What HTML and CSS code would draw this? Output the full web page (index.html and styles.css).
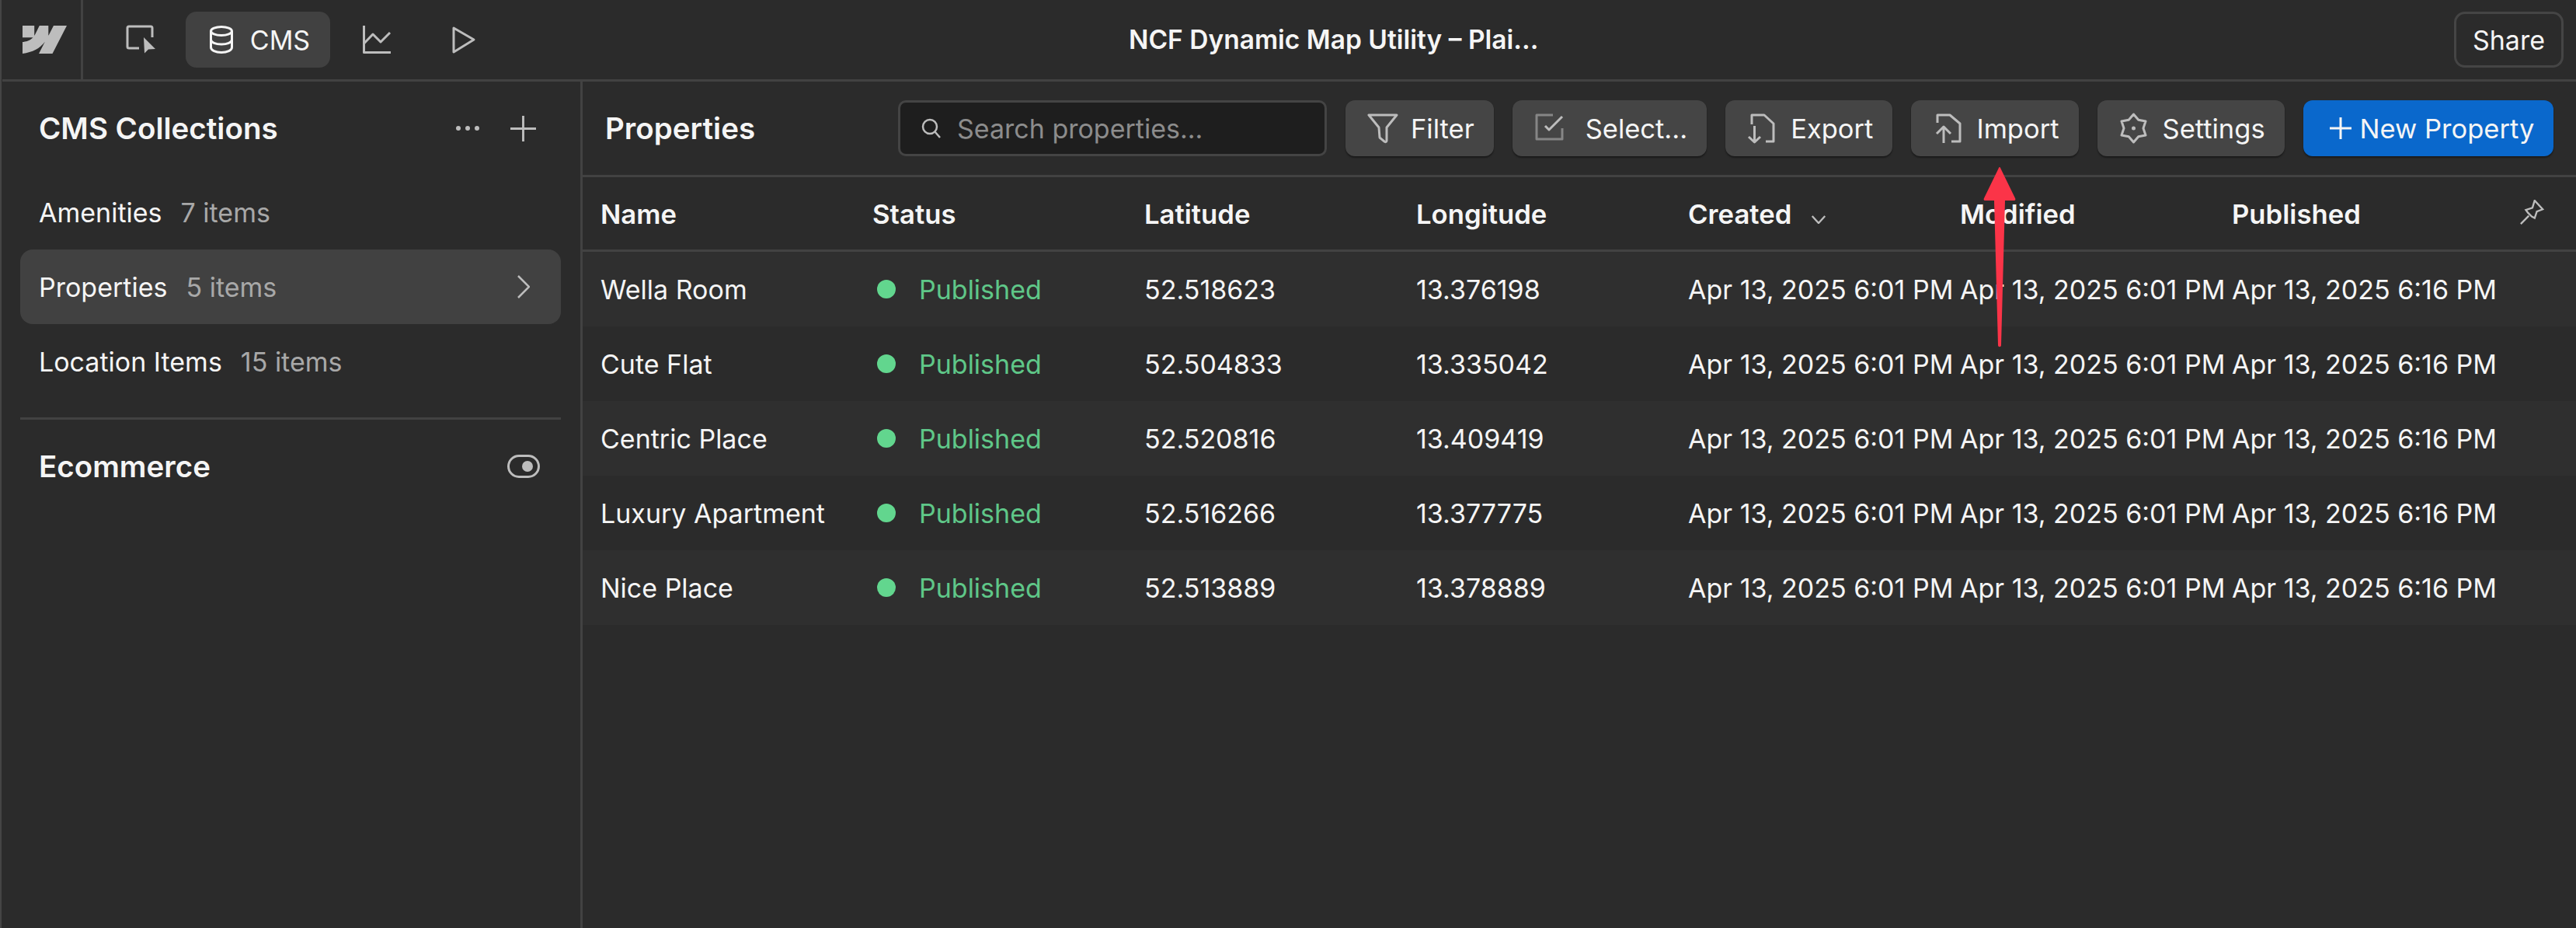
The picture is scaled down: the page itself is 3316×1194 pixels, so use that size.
FILE: index.html
```html
<!DOCTYPE html>
<html lang="en">
<head>
    <meta charset="UTF-8">
    <title>NCF Dynamic Map Utility – CMS</title>
    <link rel="stylesheet" href="styles.css">
</head>
<body>
    <header class="topbar">
        <div class="logo-cell">
            <svg class="logo" viewBox="0 0 57 36"><path d="M57 0 38.500 36H21l7.800-15.200C22.400 29.600 12.800 34.200 0 36V21.100C0 21.100 8.500 20.600 13.500 15.300H0V0h15.200v12.500L15.600 12.500 21.800 0H33.300V12.400L33.600 12.400 40 0Z"/></svg>
        </div>
        <nav class="tabs">
            <div class="tab">
                <svg class="ico" viewBox="0 0 40 40"><path d="M35 17V5q0-2-2-2H5q-2 0-2 2v24q0 2 2 2h13"/><path class="fill" d="M24 17 39 32l-9 .5-5 5z"/></svg>
            </div>
            <div class="tab tab-active">
                <svg class="ico" viewBox="0 0 40 40"><ellipse cx="20" cy="9" rx="13.500" ry="5.500"/><path d="M6.500 9v21c0 3.500 6 6.500 13.500 6.500s13.500-3 13.500-6.500V9M6.500 20c0 3.500 6 6 13.500 6s13.500-2.500 13.500-6"/></svg>
                <span>CMS</span>
            </div>
            <div class="tab">
                <svg class="ico" viewBox="0 0 40 40"><path d="M3.500 2v34.500H38M3.500 25 15 13l10 10L37 11"/></svg>
            </div>
            <div class="tab">
                <svg class="ico" viewBox="0 0 40 40"><path d="M9 5 35 20 9 36z"/></svg>
            </div>
        </nav>
        <div class="doc-title">NCF Dynamic Map Utility – Plai...</div>
        <button class="share">Share</button>
    </header>

    <div class="main">
        <aside class="sidebar">
            <div class="side-head">
                <h2>CMS Collections</h2>
                <div class="side-actions">
                    <svg class="dots" viewBox="0 0 30 8"><circle cx="3" cy="4" r="3"/><circle cx="15" cy="4" r="3"/><circle cx="27" cy="4" r="3"/></svg>
                    <svg class="plus" viewBox="0 0 34 34"><path d="M17 0v34M0 17h34"/></svg>
                </div>
            </div>
            <div class="coll"><span>Amenities</span><em>7 items</em></div>
            <div class="coll coll-active">
                <span>Properties</span><em>5 items</em>
                <svg class="chev" viewBox="0 0 16 30"><path d="M1 1l14 14L1 29"/></svg>
            </div>
            <div class="coll"><span>Location Items</span><em>15 items</em></div>
            <div class="side-rule"></div>
            <div class="ecom">
                <h2>Ecommerce</h2>
                <div class="toggle"><i></i></div>
            </div>
        </aside>

        <section class="content">
            <div class="toolbar">
                <h2>Properties</h2>
                <div class="search">
                    <svg class="search-ico" viewBox="0 0 26 26"><circle cx="11" cy="11" r="9"/><path d="M17.500 17.500 24 25"/></svg>
                    <span>Search properties...</span>
                </div>
                <button class="btn">
                    <svg class="ico" viewBox="0 0 40 40"><path d="M2 3h36L25 19v17c0 2-2 2-3 1l-6-5-1-13z"/></svg>Filter
                </button>
                <button class="btn">
                    <svg class="ico ico-dim" viewBox="0 0 40 40"><path d="M24 3H3v31h33V20"/><path class="check" d="M14 17l5 5L36 5"/></svg><span class="gap">Select...</span>
                </button>
                <button class="btn">
                    <svg class="ico" viewBox="0 0 40 40"><path d="M6 15V3h16l12 11v23H24M9.500 17v21M2 31l7.500 7 7.500-7"/></svg>Export
                </button>
                <button class="btn">
                    <svg class="ico" viewBox="0 0 40 40"><path d="M6 13V3h16l13 11v23H24M14 39V19M5 27l9-9 9 9"/></svg>Import
                </button>
                <button class="btn">
                    <svg class="ico" viewBox="0 0 40 40"><path d="M18.500 2l6.250 7.200L34 11l-3 9 3 9-9.250 1.800L18.500 38l-6.250-7.200L3 29l3-9-3-9 9.250-1.800z"/><circle class="fill" cx="18.500" cy="20" r="2.500"/></svg>Settings
                </button>
                <button class="btn btn-blue">
                    <svg class="ico" viewBox="0 0 28 28"><path d="M14 0v28M0 14h28"/></svg>New Property
                </button>
            </div>

            <div class="row head">
                <div>Name</div>
                <div>Status</div>
                <div>Latitude</div>
                <div>Longitude</div>
                <div class="sorted">Created <svg viewBox="0 0 20 12"><path d="M1 1l9 10 9-10"/></svg></div>
                <div>Modified</div>
                <div>Published</div>
                <svg class="pin" viewBox="0 0 34 34"><path d="M21 1l11 12-8 3-3 9-4-2-5-5-3-4 9-3zM13 22 2 33"/></svg>
            </div>

            <div class="row">
                <div>Wella Room</div>
                <div class="status"><i></i>Published</div>
                <div>52.518623</div>
                <div>13.376198</div>
                <div>Apr 13, 2025 6:01 PM</div>
                <div>Apr 13, 2025 6:01 PM</div>
                <div>Apr 13, 2025 6:16 PM</div>
            </div>
            <div class="row">
                <div>Cute Flat</div>
                <div class="status"><i></i>Published</div>
                <div>52.504833</div>
                <div>13.335042</div>
                <div>Apr 13, 2025 6:01 PM</div>
                <div>Apr 13, 2025 6:01 PM</div>
                <div>Apr 13, 2025 6:16 PM</div>
            </div>
            <div class="row">
                <div>Centric Place</div>
                <div class="status"><i></i>Published</div>
                <div>52.520816</div>
                <div>13.409419</div>
                <div>Apr 13, 2025 6:01 PM</div>
                <div>Apr 13, 2025 6:01 PM</div>
                <div>Apr 13, 2025 6:16 PM</div>
            </div>
            <div class="row">
                <div>Luxury Apartment</div>
                <div class="status"><i></i>Published</div>
                <div>52.516266</div>
                <div>13.377775</div>
                <div>Apr 13, 2025 6:01 PM</div>
                <div>Apr 13, 2025 6:01 PM</div>
                <div>Apr 13, 2025 6:16 PM</div>
            </div>
            <div class="row">
                <div>Nice Place</div>
                <div class="status"><i></i>Published</div>
                <div>52.513889</div>
                <div>13.378889</div>
                <div>Apr 13, 2025 6:01 PM</div>
                <div>Apr 13, 2025 6:01 PM</div>
                <div>Apr 13, 2025 6:16 PM</div>
            </div>
        </section>
    </div>

    <!-- annotation drawn over the screenshot -->
    <svg class="arrow" viewBox="0 0 44 234"><path d="M22 1 C23 1 23 2 23.500 3L42 41c1 2 0 3-2 3H29L24 230c0 3-4 3-4 0L15 44H4c-2 0-3-1-2-3L20.500 3C21 2 21 1 22 1z"/></svg>
</body>
</html>
```

FILE: styles.css
```css
* {
    box-sizing: border-box;
}

html, body {
    height: 100%;
}

body {
    margin: 0;
    padding-left: 1px;
    font-family: Inter, "Liberation Sans", sans-serif;
    font-size: 34px;
    color: #f5f5f5;
    background: linear-gradient(#1c1c1c, #1c1c1c) no-repeat left top / 1px 100%, #2b2b2b;
    border-left: 2px solid #454545;
    overflow: hidden;
    display: flex;
    flex-direction: column;
}

h2 {
    margin: 0;
    font-size: 38.5px;
    font-weight: 600;
}

.ico {
    width: 40px;
    height: 40px;
    fill: none;
    stroke: #bdbdbd;
    stroke-width: 3;
    stroke-linejoin: round;
    flex-shrink: 0;
}

.ico .fill {
    fill: #bdbdbd;
    stroke: none;
}

.ico-dim {
    stroke: #868686;
}

.ico-dim .check {
    stroke: #bdbdbd;
}

/* top bar */
.topbar {
    height: 105px;
    flex-shrink: 0;
    display: flex;
    align-items: center;
    border-bottom: 3px solid #424242;
}

.logo-cell {
    width: 104px;
    height: 100%;
    display: flex;
    align-items: center;
    padding-left: 26px;
    border-right: 3px solid #424242;
}

.logo {
    width: 57px;
    height: 36px;
    fill: #bdbdbd;
}

.tabs {
    width: 1346px;
    display: flex;
    align-items: center;
    gap: 8px;
    padding-left: 24px;
}

.tab {
    height: 72px;
    width: 100px;
    display: flex;
    align-items: center;
    justify-content: center;
    border-radius: 14px;
}

.tab-active {
    width: 186px;
    gap: 17px;
    background-color: #414141;
}

.tab-active ~ .tab {
    margin-left: 2px;
}

.tab-active .ico {
    stroke: #f5f5f5;
}

.doc-title {
    flex: 1;
    font-weight: 600;
    font-size: 33.5px;
}

.share {
    width: 141px;
    height: 72px;
    margin-right: 16px;
    background: none;
    border: 3px solid #454545;
    border-radius: 14px;
    color: #f5f5f5;
    font: inherit;
}

/* sidebar */
.main {
    flex: 1;
    display: flex;
    min-height: 0;
}

.sidebar {
    width: 747px;
    flex-shrink: 0;
    padding: 0 25px 0 23px;
    border-right: 3px solid #424242;
}

.side-head {
    height: 120px;
    display: flex;
    align-items: center;
    justify-content: space-between;
    padding: 0 32px 0 24px;
}

.side-actions {
    display: flex;
    align-items: center;
    gap: 40px;
}

.dots {
    width: 30px;
    height: 8px;
    fill: #bdbdbd;
}

.plus {
    width: 33px;
    height: 33px;
    stroke: #bdbdbd;
    stroke-width: 3;
    fill: none;
}

.coll {
    height: 96px;
    display: flex;
    align-items: center;
    padding: 0 24px;
    border-radius: 16px;
}

.coll em {
    font-style: normal;
    color: #a8a8a8;
    margin-left: 24px;
}

.coll-active {
    background-color: #414141;
}

.chev {
    width: 16px;
    height: 30px;
    margin-left: auto;
    margin-right: 16px;
    fill: none;
    stroke: #bdbdbd;
    stroke-width: 2.500;
}

.side-rule {
    height: 3px;
    margin-top: 24px;
    background-color: #424242;
}

.ecom {
    height: 120px;
    display: flex;
    align-items: center;
    justify-content: space-between;
    padding: 0 27px 0 24px;
}

.toggle {
    width: 42px;
    height: 30px;
    border: 3px solid #bdbdbd;
    border-radius: 15px;
    display: flex;
    align-items: center;
    justify-content: flex-end;
    padding-right: 6px;
}

.toggle i {
    width: 14px;
    height: 14px;
    border-radius: 50%;
    background-color: #bdbdbd;
}

/* toolbar */
.content {
    flex: 1;
    min-width: 0;
}

.toolbar {
    height: 123px;
    display: flex;
    align-items: center;
    padding: 0 0 0 29px;
    gap: 24px;
    border-bottom: 3px solid #424242;
}

.toolbar h2 {
    width: 353px;
    flex-shrink: 0;
}

.search {
    width: 552px;
    height: 72px;
    flex-shrink: 0;
    display: flex;
    align-items: center;
    gap: 20px;
    padding-left: 27px;
    color: #8c8c8c;
    background-color: #1e1e1e;
    border: 3px solid #444444;
    border-radius: 10px;
}

.search-ico {
    width: 26px;
    height: 26px;
    fill: none;
    stroke: #bdbdbd;
    stroke-width: 2.500;
}

.btn {
    height: 72px;
    display: flex;
    align-items: center;
    gap: 16px;
    padding: 0 25px 0 28px;
    color: #f5f5f5;
    font: inherit;
    font-size: 34.500px;
    background-color: #454545;
    border: 0;
    border-radius: 12px;
    box-shadow: 0 2px 2px rgba(0, 0, 0, 0.4);
    white-space: nowrap;
}

.btn .gap {
    margin-left: 10px;
}

.btn-blue {
    gap: 11px;
    padding-left: 34px;
    background-color: #0a68cc;
}

.btn-blue .ico {
    width: 28px;
    height: 28px;
    stroke: #f5f5f5;
}

/* table */
.row {
    height: 96px;
    position: relative;
    display: grid;
    grid-template-columns: repeat(7, 350px);
    align-items: center;
    padding-left: 23px;
    white-space: nowrap;
}

.row:nth-child(odd) {
    background-color: #2f2f2f;
}

.row.head {
    background: none;
    font-size: 34.700px;
    font-weight: 600;
    border-bottom: 3px solid #424242;
}

.sorted svg {
    width: 20px;
    height: 11px;
    margin-left: 16px;
    fill: none;
    stroke: #bdbdbd;
    stroke-width: 2.500;
}

.pin {
    position: absolute;
    right: 41px;
    top: 29px;
    width: 32px;
    height: 32px;
    fill: none;
    stroke: #bdbdbd;
    stroke-width: 2.500;
}

.status {
    display: flex;
    align-items: center;
    color: #5fc788;
}

.status i {
    width: 24px;
    height: 24px;
    margin: 0 30px 0 6px;
    border-radius: 50%;
    background-color: #62d68e;
}

.arrow {
    position: absolute;
    left: 2552px;
    top: 214px;
    width: 44px;
    height: 234px;
    fill: #fb3448;
}
```
